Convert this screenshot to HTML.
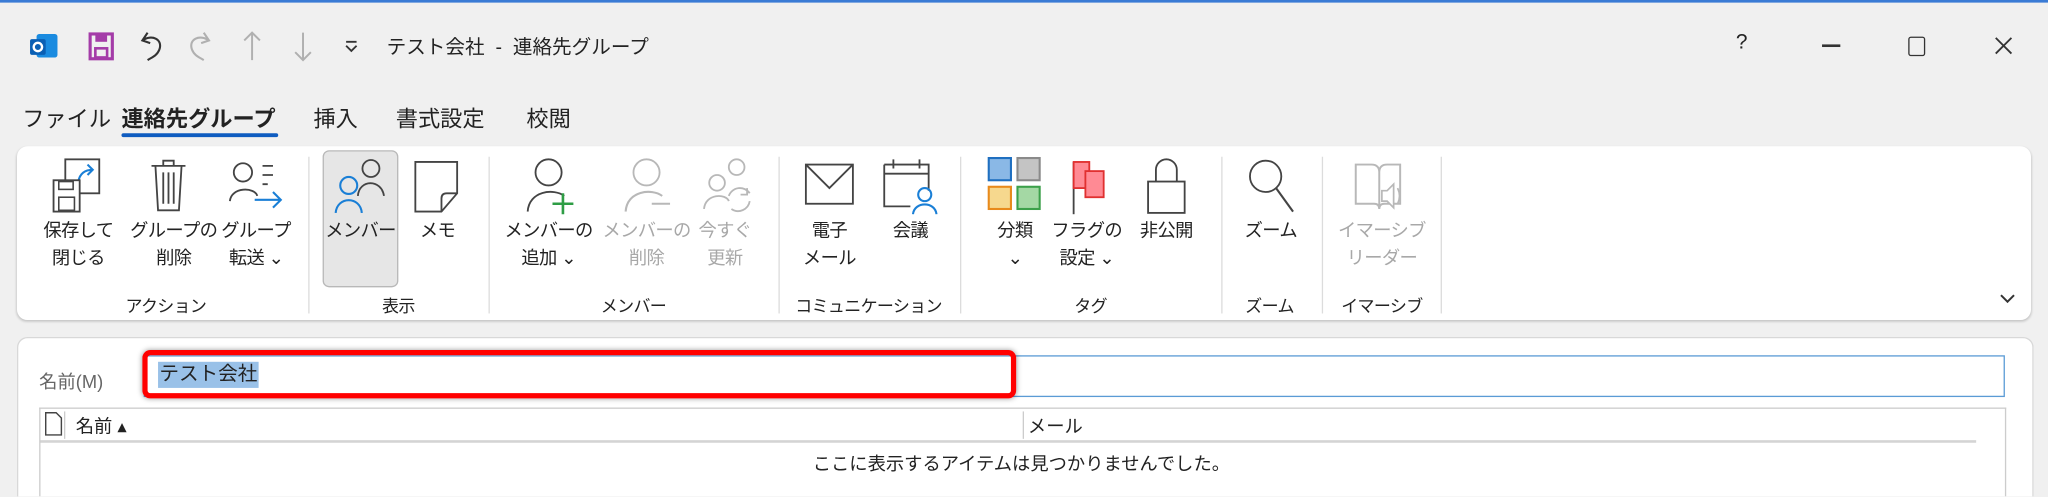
<!DOCTYPE html>
<html><head><meta charset="utf-8"><style>
html,body{margin:0;padding:0;width:2048px;height:497px;overflow:hidden;background:#f0f0f0}
#w{position:absolute;left:0;top:0;width:1568px;height:380px;transform:scale(1.30612);transform-origin:0 0;font-family:"Liberation Sans","Noto Sans CJK JP",sans-serif;color:#222;background:#f0f0f0;overflow:hidden}
.a{position:absolute;white-space:nowrap}
.lb{position:absolute;font-size:14px;text-align:center;line-height:21px;white-space:nowrap;letter-spacing:-0.5px}
.g{color:#a8a8a8}
.gl{position:absolute;top:224px;font-size:13px;text-align:center;white-space:nowrap;letter-spacing:-0.5px}
.sep{position:absolute;top:120px;width:1px;height:120px;background:#dcdcdc}
svg{position:absolute;overflow:visible}
</style></head><body><div id="w">
<div class="a" style="left:0;top:0;width:1568px;height:2px;background:#3a7bd5"></div>
<svg style="left:22px;top:24px" width="24" height="24"><rect x="6" y="2" width="16" height="18" rx="2" fill="#1a8be0"/><rect x="1" y="6" width="12" height="12" rx="1.5" fill="#0a5fb4"/><circle cx="7" cy="12" r="3.2" fill="none" stroke="#fff" stroke-width="1.8"/></svg>
<svg style="left:67px;top:24px" width="22" height="24"><rect x="2" y="2" width="17" height="19" fill="none" stroke="#a43ca8" stroke-width="2.4"/><rect x="6" y="3" width="9" height="5" fill="#a43ca8"/><rect x="6" y="13" width="9" height="7" fill="none" stroke="#a43ca8" stroke-width="2"/></svg>
<svg style="left:106px;top:22px" width="22" height="26"><path d="M7 3 L3 9 L9 11 M3 9 C10 4 19 8 16 16 C14 21 10 22 7 24" fill="none" stroke="#333" stroke-width="1.6"/></svg>
<svg style="left:142px;top:22px" width="22" height="26"><path d="M14 3 L18 9 L12 11 M18 9 C11 4 2 8 5 16 C7 21 11 22 14 24" fill="none" stroke="#b0b0b0" stroke-width="1.6"/></svg>
<svg style="left:184px;top:22px" width="18" height="26"><path d="M9 3 V24 M3 9 L9 3 L15 9" fill="none" stroke="#b0b0b0" stroke-width="1.5"/></svg>
<svg style="left:223px;top:22px" width="18" height="26"><path d="M9 3 V24 M3 18 L9 24 L15 18" fill="none" stroke="#b0b0b0" stroke-width="1.5"/></svg>
<svg style="left:263px;top:30px" width="12" height="12"><path d="M2 2 H10 M2 5 L6 9 L10 5" fill="none" stroke="#333" stroke-width="1.4"/></svg>
<div class="a" style="left:296px;top:25px;font-size:15px">テスト会社&nbsp; - &nbsp;連絡先グループ</div>
<div class="a" style="left:1329px;top:24px;font-size:16px">?</div>
<div class="a" style="left:1395px;top:34px;width:14px;height:1.5px;background:#333"></div>
<div class="a" style="left:1461px;top:28px;width:11px;height:13px;border:1.5px solid #333;border-radius:2px"></div>
<svg style="left:1526px;top:27px" width="16" height="16"><path d="M2 2 L14 14 M14 2 L2 14" stroke="#333" stroke-width="1.4"/></svg>
<div class="a" style="left:17px;top:77px;font-size:17px">ファイル</div>
<div class="a" style="left:93px;top:77px;font-size:17px;font-weight:bold">連絡先グループ</div>
<div class="a" style="left:93px;top:102px;width:120px;height:3px;background:#0f5cc0;border-radius:2px"></div>
<div class="a" style="left:240px;top:77px;font-size:17px">挿入</div>
<div class="a" style="left:303px;top:77px;font-size:17px">書式設定</div>
<div class="a" style="left:403px;top:77px;font-size:17px">校閲</div>
<div class="a" style="left:13px;top:112px;width:1542px;height:133px;background:#fff;border-radius:8px;box-shadow:0 1px 2px rgba(0,0,0,.2)"></div>
<div class="sep" style="left:236px"></div><div class="sep" style="left:374px"></div><div class="sep" style="left:596px"></div><div class="sep" style="left:735px"></div><div class="sep" style="left:935px"></div><div class="sep" style="left:1012px"></div><div class="sep" style="left:1103px"></div>
<div class="a" style="left:247px;top:115px;width:56px;height:103px;background:#e6e6e6;border:1px solid #b8b8b8;border-radius:5px"></div>
<svg style="left:40px;top:120px" width="42" height="45"><rect x="10" y="2" width="26" height="26" fill="none" stroke="#444" stroke-width="1.4"/><path d="M20 19 C21 13 25 10 31 10 M27 6 L31 10 L27 14" fill="none" stroke="#1a7fd6" stroke-width="1.6"/><rect x="1" y="18" width="20" height="24" fill="#fff" stroke="#444" stroke-width="1.4"/><rect x="5" y="19" width="11" height="6" fill="none" stroke="#444" stroke-width="1.2"/><rect x="5" y="31" width="12" height="10" fill="none" stroke="#444" stroke-width="1.2"/></svg>
<svg style="left:112px;top:120px" width="34" height="45"><path d="M4 7 H30 M13 7 V3 H21 V7 M7 7 L9 41 H25 L27 7 M13 12 V36 M17 12 V36 M21 12 V36" fill="none" stroke="#444" stroke-width="1.4"/></svg>
<svg style="left:175px;top:120px" width="44" height="45"><circle cx="11" cy="12" r="7" fill="none" stroke="#444" stroke-width="1.4"/><path d="M1 34 C2 23 20 23 22 30" fill="none" stroke="#444" stroke-width="1.4"/><path d="M26 7 H34 M26 14 H34 M26 21 H30" stroke="#444" stroke-width="1.4"/><path d="M20 33 H40 M34 27 L40 33 L34 39" fill="none" stroke="#1a7fd6" stroke-width="1.6"/></svg>
<svg style="left:254px;top:120px" width="44" height="45"><circle cx="30" cy="9" r="6.5" fill="none" stroke="#444" stroke-width="1.4"/><path d="M20 30 C21 17 38 17 40 30" fill="none" stroke="#444" stroke-width="1.4"/><circle cx="13" cy="22" r="6.5" fill="none" stroke="#1a7fd6" stroke-width="1.6"/><path d="M3 43 C4 30 22 30 23 43" fill="none" stroke="#1a7fd6" stroke-width="1.6"/></svg>
<svg style="left:316px;top:122px" width="38" height="44"><path d="M2 2 H34 V26 L22 40 H2 Z M22 40 V30 Q22 26 26 26 H34" fill="none" stroke="#444" stroke-width="1.4"/></svg>
<svg style="left:400px;top:120px" width="44" height="45"><circle cx="20" cy="12" r="10" fill="none" stroke="#444" stroke-width="1.4"/><path d="M4 42 C5 26 24 24 32 30" fill="none" stroke="#444" stroke-width="1.4"/><path d="M31 28 V44 M23 36 H39" stroke="#2e9d45" stroke-width="2"/></svg>
<svg style="left:475px;top:120px" width="44" height="45"><circle cx="20" cy="12" r="10" fill="none" stroke="#b8b8b8" stroke-width="1.4"/><path d="M4 42 C5 26 24 24 32 30 M24 36 H38" fill="none" stroke="#b8b8b8" stroke-width="1.6"/></svg>
<svg style="left:536px;top:120px" width="44" height="45"><circle cx="28" cy="8" r="6" fill="none" stroke="#b8b8b8" stroke-width="1.4"/><circle cx="13" cy="20" r="6" fill="none" stroke="#b8b8b8" stroke-width="1.4"/><path d="M3 40 C4 28 20 28 22 34 M22 30 A9 9 0 0 1 38 28 M38 34 A9 9 0 0 1 24 40 M36 24 V29 H31" fill="none" stroke="#b8b8b8" stroke-width="1.4"/></svg>
<svg style="left:615px;top:124px" width="42" height="36"><rect x="2" y="2" width="36" height="30" fill="none" stroke="#444" stroke-width="1.4"/><path d="M2 2 L20 20 L38 2" fill="none" stroke="#444" stroke-width="1.4"/></svg>
<svg style="left:675px;top:120px" width="44" height="45"><path d="M2 6 H36 V26 M2 6 V38 H22 M2 13 H36 M9 2 V9 M29 2 V9" fill="none" stroke="#444" stroke-width="1.4"/><circle cx="33" cy="29" r="5" fill="none" stroke="#1a7fd6" stroke-width="1.6"/><path d="M24 44 C25 34 41 34 42 44" fill="none" stroke="#1a7fd6" stroke-width="1.6"/></svg>
<svg style="left:756px;top:120px" width="42" height="42"><rect x="1" y="1" width="17" height="17" fill="#8ab8e6" stroke="#1f6fc0" stroke-width="1.6"/><rect x="23" y="1" width="17" height="17" fill="#c4c4c4" stroke="#8a8a8a" stroke-width="1.6"/><rect x="1" y="23" width="17" height="17" fill="#f6d88e" stroke="#e88a1c" stroke-width="1.6"/><rect x="23" y="23" width="17" height="17" fill="#a4d8a4" stroke="#3ca04a" stroke-width="1.6"/></svg>
<svg style="left:818px;top:120px" width="34" height="45"><path d="M4 4 V44" stroke="#444" stroke-width="1.4"/><rect x="4" y="4" width="12" height="20" fill="#ff8a94" stroke="#e03030" stroke-width="1.4"/><rect x="13" y="11" width="14" height="20" fill="#ff8a94" stroke="#e03030" stroke-width="1.4"/></svg>
<svg style="left:876px;top:120px" width="34" height="45"><path d="M9 19 V10 A8 8 0 0 1 25 10 V19" fill="none" stroke="#444" stroke-width="1.4"/><rect x="3" y="19" width="28" height="24" fill="none" stroke="#444" stroke-width="1.4"/></svg>
<svg style="left:952px;top:120px" width="44" height="45"><circle cx="17" cy="15" r="12" fill="none" stroke="#444" stroke-width="1.4"/><path d="M25 24 L38 42" stroke="#444" stroke-width="1.6"/></svg>
<svg style="left:1036px;top:122px" width="44" height="45"><path d="M2 4 H14 Q20 4 20 10 Q20 4 26 4 H36 V34 H24 Q20 34 20 38 Q20 34 16 34 H2 Z M20 10 V38" fill="none" stroke="#b8b8b8" stroke-width="1.5"/><path d="M22 24 H26 L31 19 V37 L26 32 H22 Z M34 22 Q37 28 34 34" fill="#fff" stroke="#b8b8b8" stroke-width="1.3"/></svg>
<div class="lb" style="left:30px;top:166px;width:60px">保存して<br>閉じる</div>
<div class="lb" style="left:95px;top:166px;width:76px">グループの<br>削除</div>
<div class="lb" style="left:166px;top:166px;width:60px">グループ<br>転送 ⌄</div>
<div class="lb" style="left:247px;top:166px;width:58px">メンバー</div>
<div class="lb" style="left:315px;top:166px;width:40px">メモ</div>
<div class="lb" style="left:380px;top:166px;width:80px">メンバーの<br>追加 ⌄</div>
<div class="lb g" style="left:455px;top:166px;width:80px">メンバーの<br>削除</div>
<div class="lb g" style="left:530px;top:166px;width:50px">今すぐ<br>更新</div>
<div class="lb" style="left:610px;top:166px;width:50px">電子<br>メール</div>
<div class="lb" style="left:675px;top:166px;width:44px">会議</div>
<div class="lb" style="left:752px;top:166px;width:50px">分類<br>⌄</div>
<div class="lb" style="left:800px;top:166px;width:64px">フラグの<br>設定 ⌄</div>
<div class="lb" style="left:864px;top:166px;width:58px">非公開</div>
<div class="lb" style="left:946px;top:166px;width:54px">ズーム</div>
<div class="lb g" style="left:1020px;top:166px;width:76px">イマーシブ<br>リーダー</div>
<div class="gl" style="left:95px;width:64px">アクション</div>
<div class="gl" style="left:285px;width:40px">表示</div>
<div class="gl" style="left:455px;width:60px">メンバー</div>
<div class="gl" style="left:600px;width:130px">コミュニケーション</div>
<div class="gl" style="left:815px;width:40px">タグ</div>
<div class="gl" style="left:944px;width:56px">ズーム</div>
<div class="gl" style="left:1020px;width:76px">イマーシブ</div>
<svg style="left:1531px;top:224px" width="12" height="10"><path d="M1 2 L6 7 L11 2" fill="none" stroke="#333" stroke-width="1.5"/></svg>
<div class="a" style="left:13px;top:258px;width:1542px;height:122px;background:#fff;border-radius:8px 8px 0 0;border:1px solid #d8d8d8;border-bottom:none"></div>
<div class="a" style="left:30px;top:282px;font-size:14px;color:#666">名前(M)</div>
<div class="a" style="left:110px;top:272px;width:1423px;height:30px;border:1px solid #5b9bd5;background:#fff"></div>
<div class="a" style="left:109px;top:268px;width:661px;height:29px;border:4px solid #f00;border-radius:6px;box-shadow:0 0 4px rgba(0,0,0,.4)"></div>
<div class="a" style="left:121px;top:277px;height:20px;background:#99c1e8;font-size:15px;line-height:20px;padding:0 1px">テスト会社</div>
<div class="a" style="left:30px;top:312px;width:1504px;height:67px;border:1px solid #ccc;border-bottom:none;background:#fff"></div>
<svg style="left:34px;top:315px" width="14" height="20"><path d="M1 1 H9 L13 5 V18 H1 Z" fill="#fff" stroke="#444" stroke-width="1.1"/></svg>
<div class="a" style="left:49px;top:315px;width:1px;height:21px;background:#ccc"></div>
<div class="a" style="left:58px;top:316px;font-size:14px">名前 ▴</div>
<div class="a" style="left:783px;top:315px;width:1px;height:21px;background:#ccc"></div>
<div class="a" style="left:787px;top:316px;font-size:14px">メール</div>
<div class="a" style="left:31px;top:337px;width:1482px;height:2px;background:#d4d4d4"></div>
<div class="a" style="left:31px;top:345px;width:1502px;text-align:center;font-size:14px">ここに表示するアイテムは見つかりませんでした。</div>
</div></body></html>
